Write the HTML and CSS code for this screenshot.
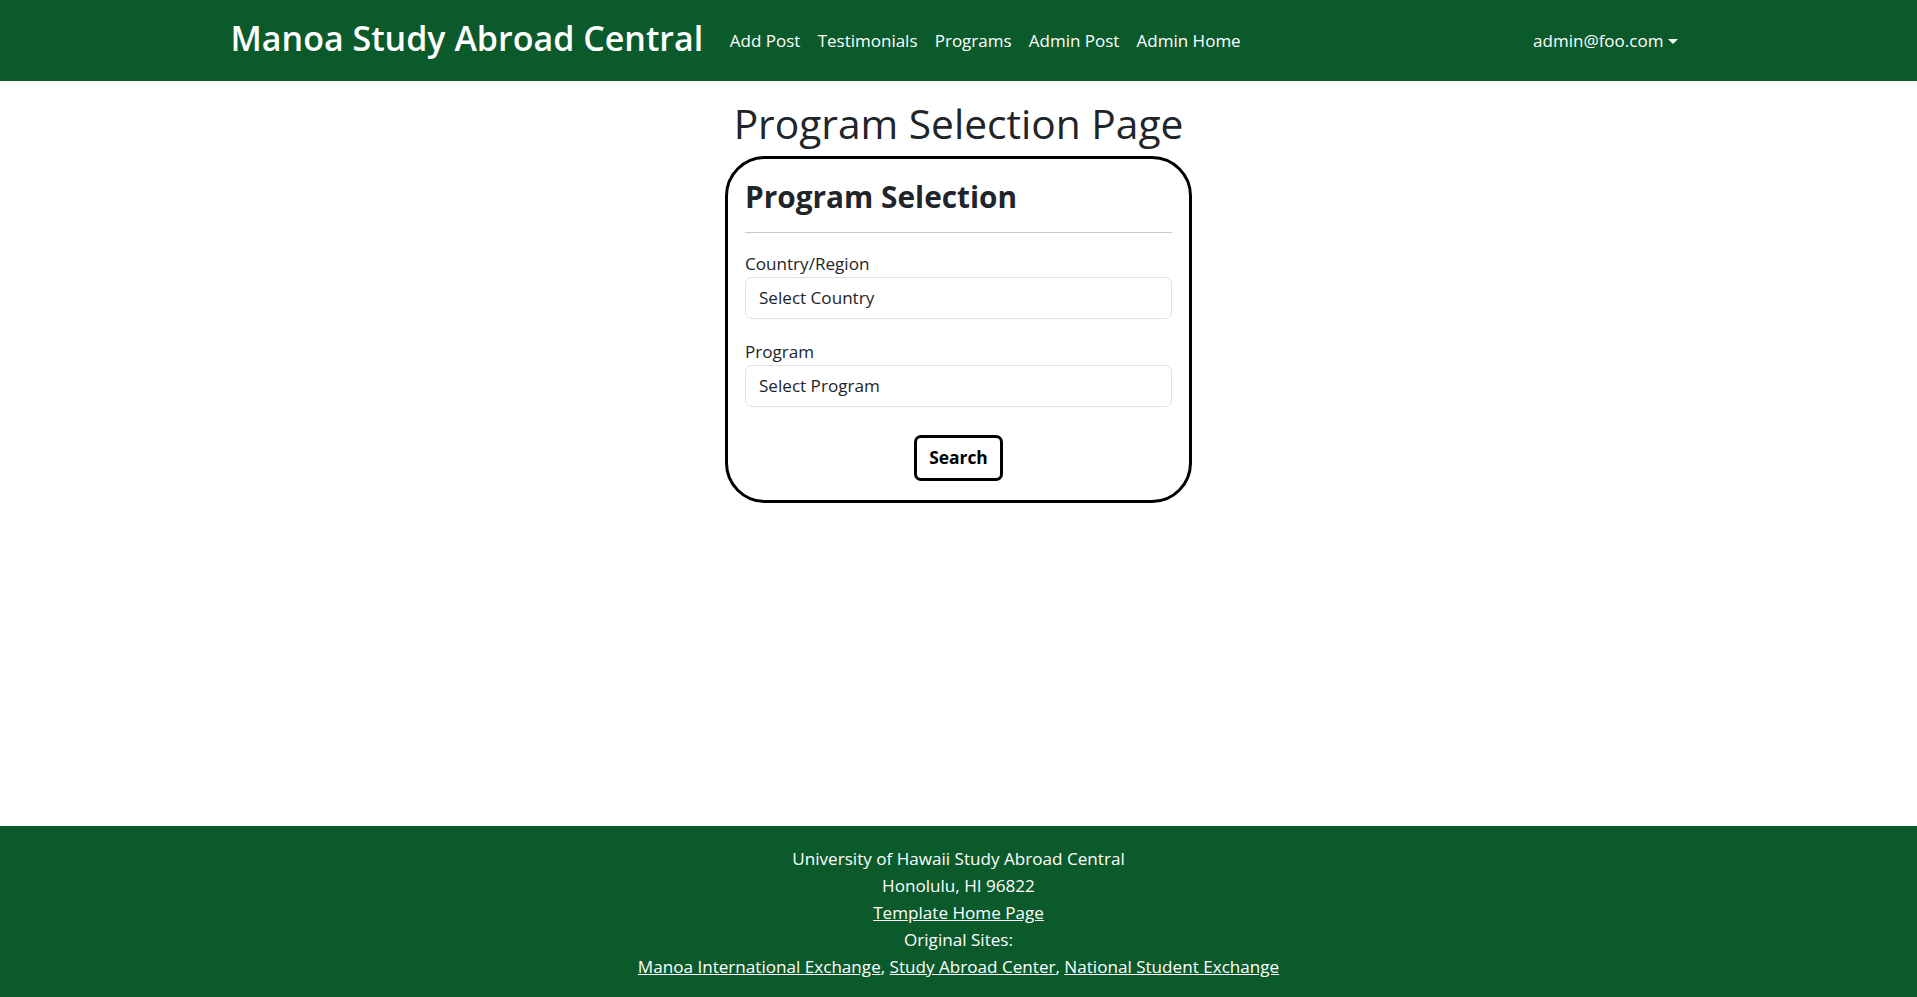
FILE: index.html
```html
<!DOCTYPE html>
<html lang="en">
<head>
<meta charset="utf-8">
<title>Manoa Study Abroad Central</title>
<link rel="stylesheet" href="styles.css">
</head>
<body>
<nav class="navbar">
  <div class="nav-inner">
    <a class="brand" href="#">Manoa Study Abroad Central</a>
    <ul class="nav-links">
      <li><a href="#">Add Post</a></li>
      <li><a href="#">Testimonials</a></li>
      <li><a href="#">Programs</a></li>
      <li><a href="#">Admin Post</a></li>
      <li><a href="#">Admin Home</a></li>
    </ul>
    <div class="user-menu">
      <a class="dropdown-toggle" href="#">admin@foo.com<span class="caret"></span></a>
    </div>
  </div>
</nav>

<main class="content">
  <h1 class="page-title">Program Selection Page</h1>
  <div class="card">
    <h2 class="card-title">Program Selection</h2>
    <hr class="divider">
    <div class="field">
      <label class="field-label" for="country">Country/Region</label>
      <select class="field-select" id="country"><option>Select Country</option></select>
    </div>
    <div class="field">
      <label class="field-label" for="program">Program</label>
      <select class="field-select" id="program"><option>Select Program</option></select>
    </div>
    <div class="actions">
      <button class="search-btn" type="button">Search</button>
    </div>
  </div>
</main>

<footer class="footer">
  <div>University of Hawaii Study Abroad Central</div>
  <div>Honolulu, HI 96822</div>
  <div><a href="#">Template Home Page</a></div>
  <div>Original Sites:</div>
  <div><a href="#">Manoa International Exchange</a>, <a href="#">Study Abroad Center</a>, <a href="#">National Student Exchange</a></div>
</footer>
</body>
</html>
```

FILE: styles.css
```css
* { box-sizing: border-box; }

html, body {
  margin: 0;
  padding: 0;
}

body {
  min-height: 100vh;
  display: flex;
  flex-direction: column;
  font-family: "Open Sans", "Noto Sans", sans-serif;
  font-size: 17.1px;
  line-height: 1.5;
  color: #212529;
  background: #fff;
}

a { color: inherit; }

/* Navbar */
.navbar {
  background: #0b5a2b;
  height: 81px;
  flex-shrink: 0;
}

.nav-inner {
  width: 1456px;
  margin: 0 auto;
  height: 100%;
  display: flex;
  align-items: center;
}

.brand {
  color: #fff;
  text-decoration: none;
  font-size: 34px;
  font-weight: 600;
  line-height: 1.2;
  margin-right: 18px;
  margin-top: -5px;
}

.nav-links {
  list-style: none;
  margin: 0;
  padding: 0;
  display: flex;
}

.nav-links a,
.dropdown-toggle {
  display: block;
  color: #fff;
  text-decoration: none;
  padding: 0 8.6px;
  font-size: 17px;
}

.user-menu {
  margin-left: auto;
}

.caret {
  display: inline-block;
  margin-left: 4.5px;
  vertical-align: 3px;
  border-top: 5.3px solid #fff;
  border-left: 5.3px solid transparent;
  border-right: 5.3px solid transparent;
}

/* Main */
.content {
  flex: 1;
  display: flex;
  flex-direction: column;
  align-items: center;
}

.page-title {
  margin: 16px 0 6px;
  font-size: 40.7px;
  font-weight: 400;
  line-height: 53px;
}

.card {
  width: 467px;
  border: 3px solid #000;
  border-radius: 40px;
  padding: 19.5px 17px 19px;
}

.card-title {
  margin: 0;
  font-size: 29.8px;
  font-weight: 700;
  line-height: 36px;
}

.divider {
  margin: 17px 0 17px;
  border: 0;
  border-top: 1px solid #c9c9c9;
}

.field + .field {
  margin-top: 19px;
}

.field-label {
  display: block;
  line-height: 27px;
}

.field-select {
  display: block;
  width: 100%;
  height: 42px;
  padding: 0 13px;
  font: inherit;
  color: #212529;
  background: #fff;
  border: 1px solid #dee2e6;
  border-radius: 6.6px;
  appearance: none;
  -webkit-appearance: none;
}

.actions {
  display: flex;
  justify-content: center;
  margin-top: 28px;
}

.search-btn {
  width: 89px;
  height: 46px;
  padding: 0;
  font: inherit;
  font-size: 17.4px;
  font-weight: 700;
  color: #000;
  background: #fff;
  border: 3px solid #000;
  border-radius: 7px;
}

/* Footer */
.footer {
  background: #0b5a2b;
  color: #fff;
  text-align: center;
  line-height: 27px;
  padding: 19px 0 17px;
  flex-shrink: 0;
}

.footer a {
  color: #fff;
  text-decoration: underline;
}
```
